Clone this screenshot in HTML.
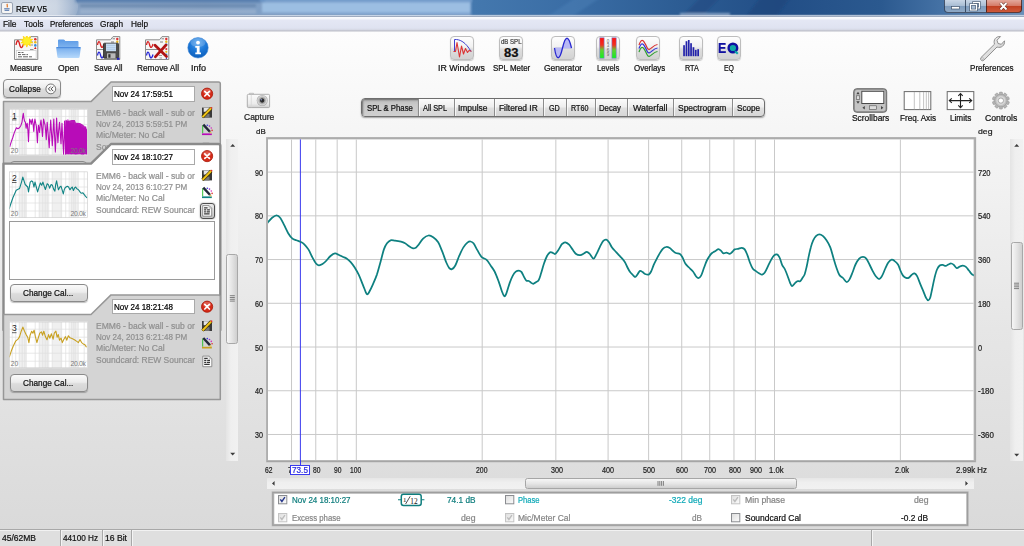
<!DOCTYPE html><html><head><meta charset="utf-8"><title>REW V5</title><style>
html,body{margin:0;padding:0;}
body{width:1024px;height:546px;overflow:hidden;position:relative;font-family:"Liberation Sans",sans-serif;font-size:8.5px;color:#1c1c1c;background:#e6e6e6;}
.t{position:absolute;white-space:nowrap;line-height:14px;transform-origin:0 50%;-webkit-text-stroke:0.22px currentColor;}
.abs{position:absolute;}
#bg{left:0;top:31px;width:1024px;height:498px;background:linear-gradient(#fdfdfd 0%,#f4f4f4 25%,#e6e6e6 60%,#dadada 100%);}
#title{left:0;top:0;width:1024px;height:16px;background:linear-gradient(90deg,#c3d3e6 0px,#b4c8df 150px,#8eaed2 330px,#6e97c4 460px,#3f72a8 560px,#2f6299 700px,#275689 860px,#3a6a9e 930px,#5c86b4 1024px);}
#menubar{left:0;top:16px;width:1024px;height:15.500px;background:linear-gradient(#8d9bb2 0,#a9b4c6 .8px,#fafbfe 1.200px,#f6f7fc 2.500px,#e4e7f4 4.500px,#dfe3f1 12px,#d6d9e5 13.600px,#c3c5cf 14.600px,#dcdde2 15.500px);}
.btn{position:absolute;border:1px solid #8a8a8a;border-radius:4px;background:linear-gradient(#fafafa,#ececec 45%,#dcdcdc 55%,#d4d4d4);box-sizing:border-box;box-shadow:0 1px 1px rgba(0,0,0,.25);}
.ibtn{position:absolute;width:24px;height:24px;border-radius:4px;box-sizing:border-box;border:1px solid #bdbdbd;background:linear-gradient(#fefefe,#f1f1f1 45%,#dedede 55%,#d2d2d2);box-shadow:0 1px 1px rgba(0,0,0,.2);}
.field{position:absolute;box-sizing:border-box;background:#fff;border:1px solid #a9a9a9;}
</style></head><body>
<div id="bg" class="abs"></div>
<svg class="abs" style="left:0;top:0" width="1024" height="16" viewBox="0 0 1024 16"><defs><linearGradient id="tb" x1="0" y1="0" x2="1024" y2="0" gradientUnits="userSpaceOnUse"><stop offset="0" stop-color="#c2cddc"/><stop offset=".055" stop-color="#bac7d9"/><stop offset=".075" stop-color="#8ba4c4"/><stop offset=".2" stop-color="#819dc0"/><stop offset=".33" stop-color="#7fa3cd"/><stop offset=".458" stop-color="#7ea4d0"/><stop offset=".462" stop-color="#4478ae"/><stop offset=".56" stop-color="#3a6da5"/><stop offset=".66" stop-color="#2d5d94"/><stop offset=".76" stop-color="#224e86"/><stop offset=".86" stop-color="#2b598f"/><stop offset=".92" stop-color="#4572a5"/><stop offset="1" stop-color="#6a90ba"/></linearGradient><filter id="bl" x="-5%" y="-50%" width="110%" height="200%"><feGaussianBlur stdDeviation="1.2"/></filter></defs><rect width="1024" height="16" fill="url(#tb)"/><g filter="url(#bl)"><rect x="75" y="-2" width="190" height="4.500" fill="#4f78a9" opacity=".8"/><rect x="80" y="4.500" width="176" height="2.500" fill="#56779f" opacity=".55"/><rect x="80" y="9.500" width="176" height="4" fill="#a9bdd6" opacity=".5"/><rect x="262" y="2.500" width="208" height="10" fill="#a0c1e4" opacity=".9"/><rect x="260" y="-2" width="212" height="4" fill="#6f9acb" opacity=".8"/><path d="M575 -2L600 -2L570 18L545 18Z" fill="#4a7fb5" opacity=".5"/><path d="M700 -2L720 -2L700 18L680 18Z" fill="#1d4880" opacity=".5"/><path d="M760 -2L790 -2L775 18L745 18Z" fill="#1c467c" opacity=".6"/><rect x="680" y="13" width="50" height="3" fill="#a8bed8" opacity=".7"/></g><rect x="70" y="14.500" width="954" height="1" fill="#8ea0bb" opacity=".55"/><rect x="0" y="15.300" width="1024" height=".7" fill="#eef2f8" opacity=".9"/></svg>
<div class="abs" style="left:-14px;top:-8px;width:92px;height:30px;border-radius:15px;background:radial-gradient(ellipse at center,rgba(255,255,255,.4) 0%,rgba(255,255,255,.22) 55%,rgba(255,255,255,0) 100%);"></div>
<svg class="abs" style="left:1px;top:2px" width="12" height="12" viewBox="0 0 12 12"><rect x="0.5" y="0.5" width="11" height="11" rx="1.5" fill="#f4f4f4" stroke="#9aa4b4"/><path d="M6.5 2c-1.5 1.3 1 1.8-.6 3.4" stroke="#e0701c" stroke-width="1.2" fill="none"/><path d="M3.2 6.8h5.4M3.6 8.3h4.6" stroke="#4a6fa8" stroke-width="1"/></svg>
<div class="t" style="left:16.0px;top:2px;font-size:8.69px;color:#000;transform:scaleX(0.930);">REW V5</div>
<div class="abs" style="left:944px;top:0;width:22px;height:13px;border:1px solid rgba(30,45,70,.75);border-top:none;border-radius:0 0 0 4px;box-sizing:border-box;background:linear-gradient(#c9d6e6 0,#a9bdd4 48%,#7f9cbd 52%,#8fa9c6 100%);"></div>
<div class="abs" style="left:965px;top:0;width:22px;height:13px;border:1px solid rgba(30,45,70,.75);border-top:none;box-sizing:border-box;background:linear-gradient(#c9d6e6 0,#a9bdd4 48%,#7f9cbd 52%,#8fa9c6 100%);"></div>
<div class="abs" style="left:986px;top:0;width:36px;height:13px;border:1px solid rgba(50,25,25,.75);border-top:none;border-radius:0 0 4px 0;box-sizing:border-box;background:linear-gradient(#e3a89c 0,#d57b68 48%,#c03f22 52%,#cf5a3a 100%);"></div>
<svg class="abs" style="left:944px;top:0" width="80" height="14" viewBox="0 0 80 14"><rect x="7.5" y="6.5" width="8" height="2.5" fill="#fff" stroke="#44566e" stroke-width=".7"/><rect x="29.5" y="2.5" width="6" height="5.5" fill="none" stroke="#44566e" stroke-width="2.4"/><rect x="29.5" y="2.5" width="6" height="5.5" fill="none" stroke="#fff" stroke-width="1.2"/><rect x="26.500" y="4.5" width="6" height="5.5" fill="#a9bdd4" stroke="#44566e" stroke-width="2.4"/><rect x="26.5" y="4.5" width="6" height="5.5" fill="none" stroke="#fff" stroke-width="1.2"/><path d="M56.500 3l6 6.500M62.500 3l-6 6.500" stroke="#5a2a22" stroke-width="3.2"/><path d="M56.500 3l6 6.500M62.500 3l-6 6.500" stroke="#fff" stroke-width="1.9"/></svg>
<div id="menubar" class="abs"></div>
<div class="t" style="left:3.0px;top:17px;color:#111;transform:scaleX(0.986);">File</div>
<div class="t" style="left:23.5px;top:17px;color:#111;transform:scaleX(0.983);">Tools</div>
<div class="t" style="left:50.0px;top:17px;color:#111;transform:scaleX(0.938);">Preferences</div>
<div class="t" style="left:100.0px;top:17px;color:#111;transform:scaleX(0.973);">Graph</div>
<div class="t" style="left:131.0px;top:17px;color:#111;transform:scaleX(0.972);">Help</div>
<svg class="abs" style="left:14px;top:36px" width="25" height="25" viewBox="0 0 25 25"><path d="M0.500 3.800H14.500L17 0.600H23.800V23.500H0.500Z" fill="#f6f6f6" stroke="#8c8c8c" stroke-width="1"/><circle cx="21.300" cy="3.200" r="1.300" fill="#e03030"/><circle cx="21.300" cy="6.300" r="1.300" fill="#e8b820"/><circle cx="21.300" cy="9.400" r="1.300" fill="#3090e0"/><path d="M20 13l1.300-2.200L22.600 13z" fill="#d02020"/><path d="M2 9C3 3.500 4.500 3.500 5.500 8S8 13 9.500 8" fill="none" stroke="#d82020" stroke-width="1.300"/><path d="M16.500 6h2.500M16.500 9h2.500M16 13.500h3.500" stroke="#777" stroke-width=".8"/><rect x="2.300" y="14.500" width="19.800" height="8" fill="#fff" stroke="#c4c4c4" stroke-width=".6"/><path d="M4 16.500h2.500M7.500 16.500h2M4 18.600h3M8 18.600h3.500M12.500 18.600h1.500M4 20.800h4M9 20.800h5M15 20.800h3" stroke="#555" stroke-width=".9"/><g transform="translate(12.800 5.100) scale(1.08)"><path d="M0-5.600L1.100-2.700L3.300-4.600L2.900-1.600L5.600-1.700L3.500 0.200L5.600 1.700L2.900 1.800L3.300 4.600L1.100 2.800L0 5.600L-1.100 2.800L-3.300 4.600L-2.900 1.800L-5.600 1.700L-3.500 0.200L-5.600-1.700L-2.900-1.600L-3.300-4.600L-1.100-2.700Z" fill="#ffe610" stroke="#ffd000" stroke-width=".6"/><circle r="3.300" fill="#fff028"/></g></svg>
<svg class="abs" style="left:55px;top:38px" width="27" height="22" viewBox="0 0 27 22"><defs><linearGradient id="fo1" x1="0" y1="0" x2="0" y2="1"><stop offset="0" stop-color="#5b9ae6"/><stop offset="1" stop-color="#86b8f0"/></linearGradient><linearGradient id="fo2" x1="0" y1="0" x2="0" y2="1"><stop offset="0" stop-color="#62a0ea"/><stop offset=".25" stop-color="#85b7f0"/><stop offset="1" stop-color="#b7d9fb"/></linearGradient></defs><path d="M3 2.500Q3 1.500 4 1.500H8.500Q9.300 1.500 9.800 2.300L10.300 3H22.500Q23.500 3 23.500 4V11H3Z" fill="url(#fo1)"/><path d="M1.200 10Q1 9 2.200 9H24.800Q26 9 25.800 10L24.600 19Q24.400 20 23.400 20H3.600Q2.600 20 2.400 19Z" fill="url(#fo2)"/><path d="M1.500 9.600H25.500" stroke="#3f80d8" stroke-width=".9" opacity=".8"/></svg>
<svg class="abs" style="left:96px;top:36px" width="25" height="25" viewBox="0 0 25 25"><path d="M0.500 3.800H14.500L17 0.600H23.800V23.500H0.500Z" fill="#f6f6f6" stroke="#8c8c8c" stroke-width="1"/><path d="M0.500 13.500H17" stroke="#8c8c8c" stroke-width="1"/><path d="M1.500 9C2.300 4.500 3.600 4.500 4.500 8.500S6.800 12.500 8 8" fill="none" stroke="#d82020" stroke-width="1.300"/><path d="M1.500 19.500C2.300 15 3.600 15 4.500 19S6.800 23 8 18.500" fill="none" stroke="#2828d8" stroke-width="1.300"/><circle cx="21.300" cy="3" r="1.200" fill="#e03030"/><circle cx="21.300" cy="5.800" r="1.200" fill="#e8b820"/><path d="M16.500 2.800h2.500M15 6h3" stroke="#666" stroke-width=".8"/><rect x="7.500" y="7.200" width="15" height="15" rx="1" fill="#4a4a4a" stroke="#2c2c2c" stroke-width=".8"/><rect x="10" y="7.600" width="10" height="7.600" fill="#c6dcf2"/><path d="M10.500 9.500h9M10.500 11.500h9M10.500 13.400h9" stroke="#a8c4e2" stroke-width=".7"/><rect x="11" y="17.300" width="8.500" height="5" fill="#b9b9b9"/><rect x="12.300" y="18.200" width="2.200" height="3.500" fill="#333"/><rect x="21" y="21.800" width="2.500" height="2" fill="#2020c0"/></svg>
<svg class="abs" style="left:145px;top:36px" width="25" height="25" viewBox="0 0 25 25"><path d="M0.500 3.800H14.500L17 0.600H23.800V23.500H0.500Z" fill="#f6f6f6" stroke="#8c8c8c" stroke-width="1"/><path d="M0.500 13.500H17" stroke="#8c8c8c" stroke-width="1"/><path d="M1.500 9C2.300 4.500 3.600 4.500 4.500 8.500S6.800 12.500 8 8" fill="none" stroke="#d82020" stroke-width="1.300"/><path d="M1.500 19.500C2.300 15 3.600 15 4.500 19S6.800 23 8 18.500" fill="none" stroke="#2828d8" stroke-width="1.300"/><circle cx="21.300" cy="3" r="1.200" fill="#e03030"/><circle cx="21.300" cy="5.800" r="1.200" fill="#e8b820"/><path d="M16.500 2.800h2.500M15 6h3" stroke="#666" stroke-width=".8"/><circle cx="21.300" cy="8.600" r="1.200" fill="#3090e0"/><circle cx="21.300" cy="13" r="1.100" fill="#e03030"/><circle cx="21.300" cy="15.800" r="1.100" fill="#e8b820"/><circle cx="21.300" cy="18.600" r="1.100" fill="#3090e0"/><path d="M14 19.500h3M14.500 22h2.500" stroke="#777" stroke-width=".7"/><path d="M20.500 22.500l1.500-1.500v2z" fill="#2020c0"/><path d="M10 9.200L21.500 20.500M21 9L10.300 20.800" stroke="#b01414" stroke-width="2.700" stroke-linecap="round"/></svg>
<svg class="abs" style="left:187px;top:37px" width="22" height="22" viewBox="0 0 22 22"><defs><radialGradient id="inf" cx=".5" cy=".25" r=".8"><stop offset="0" stop-color="#5aa6ee"/><stop offset=".5" stop-color="#1c78d8"/><stop offset="1" stop-color="#0c5cb8"/></radialGradient></defs><circle cx="11" cy="10.800" r="10.200" fill="url(#inf)" stroke="#3d86d6" stroke-width=".6"/><ellipse cx="11" cy="5.500" rx="7.500" ry="4.500" fill="#fff" opacity=".18"/><circle cx="11" cy="5.600" r="1.900" fill="#fff"/><path d="M8.300 9H12.600V15.600H14V17.300H8.300V15.600H9.800V10.700H8.300Z" fill="#fff"/></svg>
<div class="t" style="left:10.0px;top:61px;color:#111;transform:scaleX(0.974);">Measure</div>
<div class="t" style="left:58.0px;top:61px;color:#111;transform:scaleX(1.010);">Open</div>
<div class="t" style="left:94.0px;top:61px;color:#111;transform:scaleX(0.928);">Save All</div>
<div class="t" style="left:136.6px;top:61px;color:#111;transform:scaleX(0.977);">Remove All</div>
<div class="t" style="left:190.5px;top:61px;color:#111;transform:scaleX(1.065);">Info</div>
<div class="ibtn" style="left:450px;top:36px;width:24px;height:24px"></div><svg class="abs" style="left:450px;top:36px" width="24" height="24" viewBox="0 0 24 24"><path d="M4.500 15.500V3.500C10 3 16 6.500 21 15.500" fill="none" stroke="#4040d0" stroke-width="1"/><path d="M3.500 15.500H5.500L7 6.500L9.500 21L11.500 10L13.500 18L15.500 12.500L17.500 16.500L19 14.500L21.500 15.300" fill="none" stroke="#dc3434" stroke-width="1.100" stroke-linejoin="round"/></svg>
<div class="ibtn" style="left:499px;top:36px;width:24px;height:24px"></div><svg class="abs" style="left:499px;top:36px" width="24" height="24" viewBox="0 0 24 24"></svg>
<div class="t" style="left:501.1px;top:36px;line-height:11px;font-size:6.38px;color:#444;transform:scaleX(0.948);">dB SPL</div>
<div class="t" style="left:504.1px;top:43px;line-height:19px;font-size:13.04px;color:#111;transform:scaleX(1.000);font-weight:bold;">83</div>
<div class="ibtn" style="left:551px;top:36px;width:24px;height:24px"></div><svg class="abs" style="left:551px;top:36px" width="24" height="24" viewBox="0 0 24 24"><path d="M3.500 12H21" stroke="#8888e8" stroke-width=".6"/><path d="M3.500 12C5.500 25 8.500 25 11.500 12S17.500 -1 20.500 12Z" fill="#b8b8f4" /><path d="M3.500 12C5.500 25 8.500 25 11.500 12S17.500 -1 20.500 12" fill="none" stroke="#2828d0" stroke-width="1.300"/></svg>
<div class="ibtn" style="left:596px;top:36px;width:24px;height:24px"></div><svg class="abs" style="left:596px;top:36px" width="24" height="24" viewBox="0 0 24 24"><defs><linearGradient id="lv" x1="0" y1="0" x2="0" y2="1"><stop offset="0" stop-color="#ff1010"/><stop offset=".35" stop-color="#f03020"/><stop offset=".6" stop-color="#60d030"/><stop offset="1" stop-color="#10f020"/></linearGradient></defs><rect x="3.800" y="1.800" width="4.300" height="20.400" fill="url(#lv)" stroke="#8080d0" stroke-width=".6"/><rect x="15.900" y="1.800" width="4.300" height="20.400" fill="url(#lv)" stroke="#8080d0" stroke-width=".6"/><g fill="#666" font-size="4.500" font-family="Liberation Sans, sans-serif" text-anchor="middle"><text x="12" y="6.500">0</text><text x="12" y="11">3</text><text x="12" y="15.500">6</text><text x="12" y="20">9</text></g></svg>
<div class="ibtn" style="left:636px;top:36px;width:24px;height:24px"></div><svg class="abs" style="left:636px;top:36px" width="24" height="24" viewBox="0 0 24 24"><path d="M3 9C6 0 8.500 6 11 11.500S16 9 21.500 8.500" fill="none" stroke="#d83030" stroke-width="1.200"/><path d="M3 12.500C6 3.500 8.500 9.500 11 15S16 12.500 21.500 12" fill="none" stroke="#3030d8" stroke-width="1.200"/><path d="M3 16C6 7 8.500 13 11 18.500S16 16 21.500 15.500" fill="none" stroke="#30a030" stroke-width="1.200"/></svg>
<div class="ibtn" style="left:679px;top:36px;width:24px;height:24px"></div><svg class="abs" style="left:679px;top:36px" width="24" height="24" viewBox="0 0 24 24"><rect x="4.2" y="9.2" width="1.700" height="11" fill="#2222aa"/><rect x="6.6" y="5.199999999999999" width="1.700" height="15" fill="#2222aa"/><rect x="8.9" y="4.0" width="1.700" height="16.2" fill="#2222aa"/><rect x="11.2" y="7.199999999999999" width="1.700" height="13" fill="#2222aa"/><rect x="13.6" y="11.2" width="1.700" height="9" fill="#2222aa"/><rect x="15.9" y="13.899999999999999" width="1.700" height="6.3" fill="#2222aa"/><rect x="18.3" y="13.2" width="1.700" height="7" fill="#2222aa"/></svg>
<div class="ibtn" style="left:717px;top:36px;width:24px;height:24px"></div><svg class="abs" style="left:717px;top:36px" width="24" height="24" viewBox="0 0 24 24"></svg>
<div class="t" style="left:718.4px;top:37px;line-height:21px;font-size:15.50px;color:#1010a0;transform:scaleX(0.800);font-weight:bold;">E</div>
<svg class="abs" style="left:717px;top:36px" width="24" height="24" viewBox="0 0 24 24"><circle cx="15.900" cy="12" r="4.300" fill="#10a8a8" stroke="#1010a0" stroke-width="2.400"/><path d="M18 15.300L20.800 17.800" stroke="#10a8a8" stroke-width="2.200"/></svg>
<div class="t" style="left:438.0px;top:61px;color:#111;transform:scaleX(1.032);">IR Windows</div>
<div class="t" style="left:492.8px;top:61px;color:#111;transform:scaleX(0.934);">SPL Meter</div>
<div class="t" style="left:543.8px;top:61px;color:#111;transform:scaleX(0.998);">Generator</div>
<div class="t" style="left:596.6px;top:61px;color:#111;transform:scaleX(0.912);">Levels</div>
<div class="t" style="left:633.7px;top:61px;color:#111;transform:scaleX(0.933);">Overlays</div>
<div class="t" style="left:684.6px;top:61px;color:#111;transform:scaleX(0.851);">RTA</div>
<div class="t" style="left:724.0px;top:61px;color:#111;transform:scaleX(0.814);">EQ</div>
<svg class="abs" style="left:978px;top:34px" width="28" height="28" viewBox="0 0 28 28"><defs><linearGradient id="wr" x1="0" y1="0" x2="1" y2="1"><stop offset="0" stop-color="#fbfbfb"/><stop offset="1" stop-color="#c4c4c4"/></linearGradient></defs><path d="M3 23.500L16.500 10.200C15 6 18 2 22.500 2.600L19 6.200L20 9.500L23.300 10.300L26.500 6.800C27.200 11.500 23 14.500 19 13L5.800 26.300C4 27.800 1.500 25.500 3 23.500Z" fill="url(#wr)" stroke="#858585" stroke-width=".9" stroke-linejoin="round"/><circle cx="4.800" cy="24.600" r=".9" fill="#fff" stroke="#888" stroke-width=".5"/></svg>
<div class="t" style="left:970.4px;top:61px;color:#111;transform:scaleX(0.951);">Preferences</div>
<div class="btn" style="left:3.300px;top:79.300px;width:58px;height:18.400px"></div>
<div class="t" style="left:8.6px;top:82px;color:#111;transform:scaleX(0.961);">Collapse</div>
<svg class="abs" style="left:44px;top:82px" width="14" height="14" viewBox="0 0 14 14"><circle cx="6.800" cy="6.900" r="4.900" fill="#fafafa" stroke="#555" stroke-width=".8"/><path d="M6.600 4.600L4.400 6.900L6.600 9.200M9.300 4.600L7.100 6.900L9.300 9.200" fill="none" stroke="#333" stroke-width=".9"/></svg>
<svg class="abs" style="left:0;top:0" width="240" height="420" viewBox="0 0 240 420"><path d="M3.500 101.6H91L111 82.0H218.500Q220.300 82.0 220.300 83.8V200H3.500Z" fill="#d2d2d2" stroke="#979797" stroke-width="1.5" stroke-linejoin="round"/><g transform="translate(207.1 93.7)"><circle r="5.600" fill="#d42a18" stroke="#a81808" stroke-width=".8"/><ellipse cx="0" cy="-2.300" rx="4" ry="2.600" fill="#fff" opacity=".22"/><path d="M-2.300-2.300L2.300 2.300M2.300-2.300L-2.300 2.300" stroke="#fff" stroke-width="1.700" stroke-linecap="round"/></g><g transform="translate(201.5 106.8)"><rect x="0.500" y="0.800" width="10" height="10" fill="#3a3a3a"/><rect x="2.200" y="1" width="6" height="4" fill="#e4e4e4"/><rect x="3" y="7" width="5" height="3.800" fill="#777"/><path d="M1 10.300L9.800 1.200" stroke="#3c3000" stroke-width="3.200"/><path d="M1 10.300L9.800 1.200" stroke="#f0c418" stroke-width="2"/><circle cx="10" cy="1" r=".9" fill="#e03030"/></g><g transform="translate(201.5 123.8)"><path d="M1.200 1.500V9.500" stroke="#30c030" stroke-width="1"/><rect x="0.500" y="9.600" width="9.800" height="1.700" fill="#b80cb8"/><circle cx="5.800" cy="1.400" r=".8" fill="#3838e0"/><circle cx="8" cy="2.300" r=".8" fill="#9030d0"/><circle cx="9.800" cy="4.200" r=".8" fill="#d030c0"/><circle cx="10.600" cy="6.600" r=".8" fill="#e03030"/><path d="M1.800 .8L8.600 8.200" stroke="#23283a" stroke-width="2.400"/><path d="M8.300 7.800L9.800 9.600" stroke="#e0c060" stroke-width="1.400"/></g><g transform="translate(202.4 142.8)"><path d="M.4 .4H6.800L9.400 3V11H.4Z" fill="#fcfcfc" stroke="#7a7a7a" stroke-width=".8"/><path d="M6.800 .4V3H9.400" fill="none" stroke="#9a9a9a" stroke-width=".6"/><path d="M1.800 2.600h3.500M1.800 4.600h2.200M4.800 4.600h2.800M1.800 6.600h1.800M4.300 6.600h3.300M1.800 8.700h5.500" stroke="#333" stroke-width="1.150"/></g></svg>
<svg class="abs" style="left:9px;top:108px" width="80" height="48" viewBox="-0.20 -0.90 80 48"><rect x="0" y="0" width="78.6" height="46.4" fill="#fff"/><rect x="10" y="0" width="7" height="46.4" fill="#f0f0f0"/><rect x="30" y="0" width="9" height="46.4" fill="#f0f0f0"/><rect x="43" y="0" width="10" height="46.4" fill="#f0f0f0"/><rect x="61" y="0" width="8" height="46.4" fill="#f0f0f0"/><path d="M3 0V46.4M6.5 0V46.4M10 0V46.4M13 0V46.4M15.5 0V46.4M17 0V46.4M26 0V46.4M30 0V46.4M33.5 0V46.4M36 0V46.4M38 0V46.4M39.5 0V46.4M43 0V46.4M52 0V46.4M56.5 0V46.4M60 0V46.4M62.5 0V46.4M64.5 0V46.4M66 0V46.4M69 0V46.4M75 0V46.4M0 7.5H78.6M0 15.5H78.6M0 23.5H78.6M0 31.5H78.6M0 39.5H78.6" stroke="#e0e0e0" stroke-width=".7" fill="none"/><polygon points="56.2,45.5 56.4,25.6 57.6,12.7 60.5,11.7 62.6,11.2 65.6,11.0 66.7,13.8 70.8,14.1 73.8,15.8 76.9,18.9 77.9,21.5 77.9,45.7" fill="#b608b6" opacity=".93"/><polyline points="0.5,37.9 2.1,32.7 3.6,28.6 5.2,23.5 7.2,18.9 8.7,19.9 10.3,18.9 11.8,16.3 12.8,13.3 13.6,7.1 14.1,4.5 14.7,9.2 15.4,12.2 16.2,13.3 16.9,19.4 17.5,15.3 18.0,14.3 18.7,21.5 19.3,32.7 19.9,19.4 20.5,10.2 21.3,12.2 22.1,15.3 22.6,11.7 23.1,10.2 23.9,15.3 24.6,22.5 25.1,15.3 25.7,10.2 26.5,14.3 27.2,17.4 27.7,25.6 28.2,33.8 28.7,23.5 29.2,16.3 29.8,19.4 30.3,23.5 31.0,16.3 31.8,11.2 32.6,19.4 33.3,27.6 33.9,17.4 34.4,10.2 35.1,13.3 35.9,16.3 36.5,23.5 37.1,30.7 37.5,20.4 38.0,13.3 39.0,25.6 40.0,38.9 40.8,23.5 41.5,11.2 42.3,24.5 43.1,36.8 43.9,22.5 44.6,10.2 45.3,25.6 46.2,43.0 46.8,25.6 47.4,9.2 48.0,21.5 48.7,33.8 49.4,22.5 50.3,13.3 51.1,24.5 51.8,34.8 52.3,23.5 52.8,14.3 53.5,29.7 54.4,45.5 54.9,28.6 55.4,12.2 56.0,28.6 56.4,45.5 56.8,11.4 57.1,43.1 57.4,12.1 57.7,43.4 58.0,13.4 58.3,40.3 58.7,11.0 59.0,44.8 59.3,12.3 59.6,41.3 59.9,15.5 60.2,42.6 60.5,15.0 60.8,42.7 61.1,14.4 61.4,40.8 61.7,14.6 62.0,45.0 62.3,14.4 62.7,44.2 63.0,15.2 63.3,40.3 63.6,15.7 63.9,43.4 64.2,14.1 64.5,40.1 64.8,16.6 65.1,42.7 65.4,16.2 65.7,45.0 66.0,16.4 66.3,45.3 66.7,15.2 67.0,44.6 67.3,15.7 67.6,45.4 67.9,17.6 68.2,40.5 68.5,14.8 68.8,41.2 69.1,18.4 69.4,42.4 69.7,17.2 70.0,41.7 70.3,16.9 70.6,42.2 71.0,16.5 71.3,43.3 71.6,17.6 71.9,45.2 72.2,18.3 72.5,45.3 72.8,19.2 73.1,45.7 73.4,18.6 73.7,40.9 74.0,19.6 74.3,45.5 74.6,20.0 75.0,43.2 75.3,19.4 75.6,41.1 75.9,20.1 76.2,43.3 76.5,18.0 76.8,40.3 77.1,20.6 77.4,45.7" fill="none" stroke="#b80cb8" stroke-width="1.100" stroke-linejoin="round"/><rect x=".35" y=".35" width="77.89999999999999" height="45.699999999999996" fill="none" stroke="#d0d0d0" stroke-width=".7"/><text x="2.800" y="9.800" font-size="8.500" fill="#222" font-family="Liberation Sans, sans-serif">1</text><path d="M2.800 11h4.500" stroke="#222" stroke-width=".7"/><text x="1.500" y="44.300" font-size="6.800" fill="#7a7a7a" font-family="Liberation Sans, sans-serif">20</text><text x="76.500" y="44.300" font-size="6.800" fill="#7a7a7a" text-anchor="end" font-family="Liberation Sans, sans-serif" letter-spacing="-.3">20.0k</text></svg>
<div class="field" style="left:111.600px;top:86.3px;width:83.300px;height:15.300px"></div>
<div class="t" style="left:114.3px;top:87px;color:#000;transform:scaleX(0.944);">Nov 24 17:59:51</div>
<div class="abs" style="left:95px;top:105.3px;width:99.800px;height:50px;overflow:hidden">
<div class="t" style="left:0.7px;top:1px;color:#909090;transform:scaleX(1.006);">EMM6 - back wall - sub or</div>
<div class="t" style="left:0.7px;top:12px;color:#909090;transform:scaleX(0.946);">Nov 24, 2013 5:59:51 PM</div>
<div class="t" style="left:0.7px;top:23px;color:#909090;transform:scaleX(1.009);">Mic/Meter: No Cal</div>
<div class="t" style="left:0.7px;top:35px;color:#909090;transform:scaleX(0.994);">Soundcard: REW Souncard</div>
</div>
<div class="btn" style="left:9.700px;top:161.3px;width:77.800px;height:17.200px"></div>
<svg class="abs" style="left:0;top:0" width="240" height="420" viewBox="0 0 240 420"><path d="M3.500 163.6H91L111 144.0H218.500Q220.300 144.0 220.300 145.8V330H3.500Z" fill="#ffffff" stroke="#8a8a8a" stroke-width="2.4" stroke-linejoin="round"/><g transform="translate(207.1 156.10000000000002)"><circle r="5.600" fill="#d42a18" stroke="#a81808" stroke-width=".8"/><ellipse cx="0" cy="-2.300" rx="4" ry="2.600" fill="#fff" opacity=".22"/><path d="M-2.300-2.300L2.300 2.300M2.300-2.300L-2.300 2.300" stroke="#fff" stroke-width="1.700" stroke-linecap="round"/></g><g transform="translate(201.5 169.60000000000002)"><rect x="0.500" y="0.800" width="10" height="10" fill="#3a3a3a"/><rect x="2.200" y="1" width="6" height="4" fill="#e4e4e4"/><rect x="3" y="7" width="5" height="3.800" fill="#777"/><path d="M1 10.300L9.800 1.200" stroke="#3c3000" stroke-width="3.200"/><path d="M1 10.300L9.800 1.200" stroke="#f0c418" stroke-width="2"/><circle cx="10" cy="1" r=".9" fill="#e03030"/></g><g transform="translate(201.5 186.8)"><path d="M1.200 1.500V9.500" stroke="#30c030" stroke-width="1"/><rect x="0.500" y="9.600" width="9.800" height="1.700" fill="#108484"/><circle cx="5.800" cy="1.400" r=".8" fill="#3838e0"/><circle cx="8" cy="2.300" r=".8" fill="#9030d0"/><circle cx="9.800" cy="4.200" r=".8" fill="#d030c0"/><circle cx="10.600" cy="6.600" r=".8" fill="#e03030"/><path d="M1.800 .8L8.600 8.200" stroke="#23283a" stroke-width="2.400"/><path d="M8.300 7.800L9.800 9.600" stroke="#e0c060" stroke-width="1.400"/></g></svg>
<svg class="abs" style="left:9px;top:171px" width="80" height="48" viewBox="-0.20 -0.50 80 48"><rect x="0" y="0" width="78.6" height="46.4" fill="#fff"/><rect x="10" y="0" width="7" height="46.4" fill="#f0f0f0"/><rect x="30" y="0" width="9" height="46.4" fill="#f0f0f0"/><rect x="43" y="0" width="10" height="46.4" fill="#f0f0f0"/><rect x="61" y="0" width="8" height="46.4" fill="#f0f0f0"/><path d="M3 0V46.4M6.5 0V46.4M10 0V46.4M13 0V46.4M15.5 0V46.4M17 0V46.4M26 0V46.4M30 0V46.4M33.5 0V46.4M36 0V46.4M38 0V46.4M39.5 0V46.4M43 0V46.4M52 0V46.4M56.5 0V46.4M60 0V46.4M62.5 0V46.4M64.5 0V46.4M66 0V46.4M69 0V46.4M75 0V46.4M0 7.5H78.6M0 15.5H78.6M0 23.5H78.6M0 31.5H78.6M0 39.5H78.6" stroke="#e0e0e0" stroke-width=".7" fill="none"/><polyline points="-0.1,37.7 1.7,32.0 3.7,26.2 7.0,18.8 10.3,17.1 12.3,10.6 13.6,5.6 14.9,9.7 16.0,13.0 18.5,15.5 19.3,20.4 21.0,10.6 22.3,9.4 23.5,10.1 24.8,15.5 25.8,10.6 27.1,15.5 28.4,20.4 30.1,14.7 31.2,11.4 32.5,13.8 33.7,10.6 35.0,14.7 36.2,18.0 38.0,12.2 39.3,13.4 40.4,16.7 41.9,13.0 43.2,13.8 44.4,17.6 45.7,19.6 46.5,13.0 47.4,9.4 48.4,14.7 49.3,18.3 50.7,15.5 51.8,14.7 53.1,18.8 54.1,22.4 55.1,18.0 56.1,16.0 58.1,14.7 59.4,15.5 60.7,18.3 61.9,16.7 63.0,15.5 64.2,19.0 65.5,16.3 66.5,15.5 67.6,17.3 69.0,18.0 70.3,19.6 71.3,21.3 72.6,21.8 73.7,21.3 75.1,23.2 76.2,24.6 77.9,26.5" fill="none" stroke="#108484" stroke-width="1.100" stroke-linejoin="round"/><rect x=".35" y=".35" width="77.89999999999999" height="45.699999999999996" fill="none" stroke="#d0d0d0" stroke-width=".7"/><text x="2.800" y="9.800" font-size="8.500" fill="#222" font-family="Liberation Sans, sans-serif">2</text><path d="M2.800 11h4.500" stroke="#222" stroke-width=".7"/><text x="1.500" y="44.300" font-size="6.800" fill="#7a7a7a" font-family="Liberation Sans, sans-serif">20</text><text x="76.500" y="44.300" font-size="6.800" fill="#7a7a7a" text-anchor="end" font-family="Liberation Sans, sans-serif" letter-spacing="-.3">20.0k</text></svg>
<div class="field" style="left:111.600px;top:149.3px;width:83.300px;height:15.300px"></div>
<div class="t" style="left:114.3px;top:150px;color:#000;transform:scaleX(0.944);">Nov 24 18:10:27</div>
<div class="abs" style="left:95px;top:168.3px;width:99.800px;height:50px;overflow:hidden">
<div class="t" style="left:0.7px;top:1px;color:#909090;transform:scaleX(1.006);">EMM6 - back wall - sub or</div>
<div class="t" style="left:0.7px;top:12px;color:#909090;transform:scaleX(0.946);">Nov 24, 2013 6:10:27 PM</div>
<div class="t" style="left:0.7px;top:23px;color:#909090;transform:scaleX(1.009);">Mic/Meter: No Cal</div>
<div class="t" style="left:0.7px;top:35px;color:#909090;transform:scaleX(0.994);">Soundcard: REW Souncard</div>
</div>
<div class="btn" style="left:199.500px;top:203.300px;width:15.300px;height:15.300px;border-color:#4e4e4e;border-radius:3px;background:linear-gradient(#ececec,#c4c4c4);box-shadow:0 0 1.500px rgba(0,0,0,.5)"></div>
<svg class="abs" style="left:0;top:0" width="240" height="420" viewBox="0 0 240 420"><g transform="translate(202.3 205.2)"><path d="M.4 .4H6.800L9.400 3V11H.4Z" fill="#fcfcfc" stroke="#7a7a7a" stroke-width=".8"/><path d="M6.800 .4V3H9.400" fill="none" stroke="#9a9a9a" stroke-width=".6"/><path d="M1.800 2.600h3.500M1.800 4.600h2.200M4.800 4.600h2.800M1.800 6.600h1.800M4.300 6.600h3.300M1.800 8.700h5.500" stroke="#333" stroke-width="1.150"/></g></svg>
<div class="field" style="left:9px;top:221.300px;width:205.800px;height:58.700px;border-color:#9a9a9a"></div>
<div class="btn" style="left:10px;top:284px;width:78px;height:18px"></div>
<div class="t" style="left:22.7px;top:286px;color:#111;transform:scaleX(0.968);">Change Cal...</div>
<svg class="abs" style="left:0;top:0" width="240" height="420" viewBox="0 0 240 420"><path d="M3.500 314.5H91L111 294.9H218.500Q220.300 294.9 220.300 296.7V399.6H3.500Z" fill="#d4d4d4" stroke="#979797" stroke-width="1.5" stroke-linejoin="round"/><g transform="translate(207.1 306.7)"><circle r="5.600" fill="#d42a18" stroke="#a81808" stroke-width=".8"/><ellipse cx="0" cy="-2.300" rx="4" ry="2.600" fill="#fff" opacity=".22"/><path d="M-2.300-2.300L2.300 2.300M2.300-2.300L-2.300 2.300" stroke="#fff" stroke-width="1.700" stroke-linecap="round"/></g><g transform="translate(201.5 320.2)"><rect x="0.500" y="0.800" width="10" height="10" fill="#3a3a3a"/><rect x="2.200" y="1" width="6" height="4" fill="#e4e4e4"/><rect x="3" y="7" width="5" height="3.800" fill="#777"/><path d="M1 10.300L9.800 1.200" stroke="#3c3000" stroke-width="3.200"/><path d="M1 10.300L9.800 1.200" stroke="#f0c418" stroke-width="2"/><circle cx="10" cy="1" r=".9" fill="#e03030"/></g><g transform="translate(201.5 337.2)"><path d="M1.200 1.500V9.500" stroke="#30c030" stroke-width="1"/><rect x="0.500" y="9.600" width="9.800" height="1.700" fill="#c8a020"/><circle cx="5.800" cy="1.400" r=".8" fill="#3838e0"/><circle cx="8" cy="2.300" r=".8" fill="#9030d0"/><circle cx="9.800" cy="4.200" r=".8" fill="#d030c0"/><circle cx="10.600" cy="6.600" r=".8" fill="#e03030"/><path d="M1.800 .8L8.600 8.200" stroke="#23283a" stroke-width="2.400"/><path d="M8.300 7.800L9.800 9.600" stroke="#e0c060" stroke-width="1.400"/></g><g transform="translate(202.4 355.7)"><path d="M.4 .4H6.800L9.400 3V11H.4Z" fill="#fcfcfc" stroke="#7a7a7a" stroke-width=".8"/><path d="M6.800 .4V3H9.400" fill="none" stroke="#9a9a9a" stroke-width=".6"/><path d="M1.800 2.600h3.500M1.800 4.600h2.200M4.800 4.600h2.800M1.800 6.600h1.800M4.300 6.600h3.300M1.800 8.700h5.500" stroke="#333" stroke-width="1.150"/></g></svg>
<svg class="abs" style="left:9px;top:321px" width="80" height="48" viewBox="-0.20 -0.70 80 48"><rect x="0" y="0" width="78.6" height="46.4" fill="#fff"/><rect x="10" y="0" width="7" height="46.4" fill="#f0f0f0"/><rect x="30" y="0" width="9" height="46.4" fill="#f0f0f0"/><rect x="43" y="0" width="10" height="46.4" fill="#f0f0f0"/><rect x="61" y="0" width="8" height="46.4" fill="#f0f0f0"/><path d="M3 0V46.4M6.5 0V46.4M10 0V46.4M13 0V46.4M15.5 0V46.4M17 0V46.4M26 0V46.4M30 0V46.4M33.5 0V46.4M36 0V46.4M38 0V46.4M39.5 0V46.4M43 0V46.4M52 0V46.4M56.5 0V46.4M60 0V46.4M62.5 0V46.4M64.5 0V46.4M66 0V46.4M69 0V46.4M75 0V46.4M0 7.5H78.6M0 15.5H78.6M0 23.5H78.6M0 31.5H78.6M0 39.5H78.6" stroke="#e0e0e0" stroke-width=".7" fill="none"/><polyline points="-0.0,35.6 2.0,29.6 4.0,24.6 6.4,19.5 8.8,17.5 10.4,14.9 12.0,9.5 13.7,5.4 15.3,9.5 16.9,12.9 18.5,15.5 19.7,20.9 20.9,13.5 22.5,9.5 23.7,11.5 24.9,8.5 26.1,14.5 27.7,20.9 29.0,16.5 30.6,11.5 32.2,10.1 33.4,13.5 34.6,9.5 36.2,14.9 37.8,18.1 39.4,12.9 40.6,16.5 42.2,12.1 43.9,17.5 45.1,11.5 46.7,9.5 47.9,15.5 49.1,12.9 50.3,18.5 51.9,16.5 53.1,20.9 54.7,17.5 56.3,14.9 57.5,18.5 59.2,14.1 60.8,16.1 62.8,16.9 65.2,18.1 67.6,19.7 69.2,20.9 70.8,17.7 72.4,20.9 74.1,22.2 75.7,23.0 77.3,25.6" fill="none" stroke="#c8a020" stroke-width="1.100" stroke-linejoin="round"/><rect x=".35" y=".35" width="77.89999999999999" height="45.699999999999996" fill="none" stroke="#d0d0d0" stroke-width=".7"/><text x="2.800" y="9.800" font-size="8.500" fill="#222" font-family="Liberation Sans, sans-serif">3</text><path d="M2.800 11h4.500" stroke="#222" stroke-width=".7"/><text x="1.500" y="44.300" font-size="6.800" fill="#7a7a7a" font-family="Liberation Sans, sans-serif">20</text><text x="76.500" y="44.300" font-size="6.800" fill="#7a7a7a" text-anchor="end" font-family="Liberation Sans, sans-serif" letter-spacing="-.3">20.0k</text></svg>
<div class="field" style="left:111.600px;top:299.2px;width:83.300px;height:15.300px"></div>
<div class="t" style="left:114.3px;top:300px;color:#000;transform:scaleX(0.944);">Nov 24 18:21:48</div>
<div class="abs" style="left:95px;top:318.2px;width:99.800px;height:50px;overflow:hidden">
<div class="t" style="left:0.7px;top:1px;color:#909090;transform:scaleX(1.006);">EMM6 - back wall - sub or</div>
<div class="t" style="left:0.7px;top:12px;color:#909090;transform:scaleX(0.946);">Nov 24, 2013 6:21:48 PM</div>
<div class="t" style="left:0.7px;top:23px;color:#909090;transform:scaleX(1.009);">Mic/Meter: No Cal</div>
<div class="t" style="left:0.7px;top:35px;color:#909090;transform:scaleX(0.994);">Soundcard: REW Souncard</div>
</div>
<div class="btn" style="left:10px;top:374px;width:78px;height:18px"></div>
<div class="t" style="left:22.7px;top:376px;color:#111;transform:scaleX(0.968);">Change Cal...</div>
<div class="abs" style="left:226px;top:139px;width:12px;height:322px;background:linear-gradient(90deg,#e4e4e4,#efefef 40%,#f1f1f1)"></div>
<div class="abs" style="left:226px;top:254px;width:12px;height:90px;box-sizing:border-box;border:1px solid #a8a8a8;border-radius:2.500px;background:linear-gradient(90deg,#f6f6f6,#e4e4e4 50%,#cfcfcf)"></div>
<svg class="abs" style="left:226px;top:138px" width="14" height="324" viewBox="0 0 14 324"><path d="M4.200 8.800L6.700 6.100L9.200 8.800Z" fill="#3c3c3c"/><path d="M4.200 314.800L6.700 317.500L9.200 314.800Z" fill="#3c3c3c"/><path d="M3.800 157.700h5M3.800 159.500h5M3.800 161.300h5M3.800 163.100h5" stroke="#555" stroke-width=".7"/></svg>
<svg class="abs" style="left:246px;top:92px" width="26" height="18" viewBox="0 0 26 18"><defs><linearGradient id="cam" x1="0" y1="0" x2="0" y2="1"><stop offset="0" stop-color="#fbfbfb"/><stop offset=".7" stop-color="#ececec"/><stop offset="1" stop-color="#cfcfcf"/></linearGradient><radialGradient id="lens" cx=".5" cy=".5" r=".5"><stop offset="0" stop-color="#222"/><stop offset=".32" stop-color="#333"/><stop offset=".45" stop-color="#999"/><stop offset=".8" stop-color="#d8d8d8"/><stop offset="1" stop-color="#a4a4a4"/></radialGradient></defs><path d="M3.500 1.200h4v1.300h-4z" fill="#dcdcdc" stroke="#aaa" stroke-width=".5"/><rect x="1.300" y="2.300" width="22.300" height="13.300" rx="1.200" fill="url(#cam)" stroke="#9c9c9c" stroke-width=".8"/><path d="M5.300 2.800V15.200" stroke="#d8d8d8" stroke-width=".8"/><circle cx="16.200" cy="8.500" r="5.500" fill="url(#lens)"/><circle cx="15.400" cy="7.700" r=".8" fill="#8090c0"/></svg>
<div class="t" style="left:244.0px;top:110px;color:#222;transform:scaleX(0.999);">Capture</div>
<div class="t" style="left:255.5px;top:125px;line-height:13px;font-size:8.02px;color:#222;transform:scaleX(0.989);">dB</div>
<div class="t" style="left:978.0px;top:125px;line-height:13px;font-size:8.02px;color:#222;transform:scaleX(1.084);">deg</div>
<div class="abs" style="left:360.500px;top:98.200px;width:404.500px;height:18.600px;box-sizing:border-box;border:1px solid #6e6e6e;border-radius:4px;background:linear-gradient(#fbfbfb,#efefef 45%,#dfdfdf 55%,#d6d6d6);box-shadow:0 1px 1.500px rgba(0,0,0,.35);overflow:hidden"><div class="abs" style="left:0;top:0;width:56.500px;height:17.400px;background:linear-gradient(#b9b9b9,#c9c9c9 30%,#d0d0d0);box-shadow:inset 1px 1px 2px rgba(0,0,0,.45)"></div><div class="abs" style="left:56.2px;top:0;width:1px;height:17.400px;background:#8c8c8c"></div><div class="abs" style="left:57.2px;top:0;width:1px;height:17.400px;background:rgba(255,255,255,.7)"></div><div class="abs" style="left:92.1px;top:0;width:1px;height:17.400px;background:#8c8c8c"></div><div class="abs" style="left:93.1px;top:0;width:1px;height:17.400px;background:rgba(255,255,255,.7)"></div><div class="abs" style="left:132.0px;top:0;width:1px;height:17.400px;background:#8c8c8c"></div><div class="abs" style="left:133.0px;top:0;width:1px;height:17.400px;background:rgba(255,255,255,.7)"></div><div class="abs" style="left:181.9px;top:0;width:1px;height:17.400px;background:#8c8c8c"></div><div class="abs" style="left:182.9px;top:0;width:1px;height:17.400px;background:rgba(255,255,255,.7)"></div><div class="abs" style="left:204.0px;top:0;width:1px;height:17.400px;background:#8c8c8c"></div><div class="abs" style="left:205.0px;top:0;width:1px;height:17.400px;background:rgba(255,255,255,.7)"></div><div class="abs" style="left:233.0px;top:0;width:1px;height:17.400px;background:#8c8c8c"></div><div class="abs" style="left:234.0px;top:0;width:1px;height:17.400px;background:rgba(255,255,255,.7)"></div><div class="abs" style="left:265.5px;top:0;width:1px;height:17.400px;background:#8c8c8c"></div><div class="abs" style="left:266.5px;top:0;width:1px;height:17.400px;background:rgba(255,255,255,.7)"></div><div class="abs" style="left:311.0px;top:0;width:1px;height:17.400px;background:#8c8c8c"></div><div class="abs" style="left:312.0px;top:0;width:1px;height:17.400px;background:rgba(255,255,255,.7)"></div><div class="abs" style="left:370.8px;top:0;width:1px;height:17.400px;background:#8c8c8c"></div><div class="abs" style="left:371.8px;top:0;width:1px;height:17.400px;background:rgba(255,255,255,.7)"></div></div>
<div class="t" style="left:366.8px;top:101px;color:#111;transform:scaleX(0.913);">SPL &amp; Phase</div>
<div class="t" style="left:423.0px;top:101px;color:#111;transform:scaleX(0.865);">All SPL</div>
<div class="t" style="left:458.0px;top:101px;color:#111;transform:scaleX(0.991);">Impulse</div>
<div class="t" style="left:498.7px;top:101px;color:#111;transform:scaleX(0.987);">Filtered IR</div>
<div class="t" style="left:548.7px;top:101px;color:#111;transform:scaleX(0.847);">GD</div>
<div class="t" style="left:570.8px;top:101px;color:#111;transform:scaleX(0.843);">RT60</div>
<div class="t" style="left:599.4px;top:101px;color:#111;transform:scaleX(0.909);">Decay</div>
<div class="t" style="left:632.5px;top:101px;color:#111;transform:scaleX(1.038);">Waterfall</div>
<div class="t" style="left:677.8px;top:101px;color:#111;transform:scaleX(0.995);">Spectrogram</div>
<div class="t" style="left:736.9px;top:101px;color:#111;transform:scaleX(0.954);">Scope</div>
<svg class="abs" style="left:850px;top:86px" width="174" height="30" viewBox="0 0 174 30"><rect x="3.700" y="2.700" width="33" height="23.600" rx="3" fill="#9a9a9a" stroke="#6a6a6a" stroke-width="1"/><rect x="5" y="4" width="30.400" height="21" rx="2" fill="#c4c4c4"/><rect x="11.800" y="5.300" width="22" height="12.200" fill="#fff" stroke="#4a4a4a" stroke-width="1"/><path d="M6.300 8.200L8 5.800L9.700 8.200ZM6.300 15.300L8 17.700L9.700 15.300Z" fill="#444"/><rect x="6.300" y="9.800" width="3.400" height="3.600" fill="#ddd" stroke="#555" stroke-width=".6"/><path d="M14.800 20L12.400 21.700L14.800 23.400ZM31 20L33.400 21.700L31 23.400Z" fill="#444"/><rect x="19.500" y="19.800" width="6.800" height="3.600" fill="#ddd" stroke="#555" stroke-width=".6"/><rect x="54.200" y="5.600" width="26.600" height="18" fill="#fff" stroke="#6a6a6a" stroke-width="1"/><path d="M64.300 6V23.300M69.800 6V23.300M73.600 6V23.300M76.300 6V23.300M78.600 6V23.300" stroke="#b4b4b4" stroke-width=".8"/><rect x="97.200" y="5.600" width="26.600" height="18" fill="#fff" stroke="#6a6a6a" stroke-width="1"/><path d="M99.500 14.600H121.500M110.500 8V21.200" stroke="#222" stroke-width="1.100"/><path d="M101.800 12.400L99.300 14.600L101.800 16.800M119.200 12.400L121.700 14.600L119.200 16.800M108.300 9.900L110.500 7.600L112.700 9.900M108.300 19.300L110.500 21.600L112.700 19.300" fill="none" stroke="#222" stroke-width="1.100"/><g transform="translate(150.900 14.600)"><g fill="#b4b4b4" stroke="#8e8e8e" stroke-width=".5"><rect x="-1.600" y="-8.500" width="3.200" height="5" rx=".8" transform="rotate(0)"/><rect x="-1.600" y="-8.500" width="3.200" height="5" rx=".8" transform="rotate(36)"/><rect x="-1.600" y="-8.500" width="3.200" height="5" rx=".8" transform="rotate(72)"/><rect x="-1.600" y="-8.500" width="3.200" height="5" rx=".8" transform="rotate(108)"/><rect x="-1.600" y="-8.500" width="3.200" height="5" rx=".8" transform="rotate(144)"/><rect x="-1.600" y="-8.500" width="3.200" height="5" rx=".8" transform="rotate(180)"/><rect x="-1.600" y="-8.500" width="3.200" height="5" rx=".8" transform="rotate(216)"/><rect x="-1.600" y="-8.500" width="3.200" height="5" rx=".8" transform="rotate(252)"/><rect x="-1.600" y="-8.500" width="3.200" height="5" rx=".8" transform="rotate(288)"/><rect x="-1.600" y="-8.500" width="3.200" height="5" rx=".8" transform="rotate(324)"/></g><circle r="6.200" fill="#bdbdbd" stroke="#9a9a9a" stroke-width=".6"/><circle r="4.600" fill="#d6d6d6"/><circle r="2.600" fill="#fff" stroke="#9a9a9a" stroke-width=".8"/></g></svg>
<div class="t" style="left:851.7px;top:111px;color:#111;transform:scaleX(0.987);">Scrollbars</div>
<div class="t" style="left:900.0px;top:111px;color:#111;transform:scaleX(0.953);">Freq. Axis</div>
<div class="t" style="left:950.0px;top:111px;color:#111;transform:scaleX(0.960);">Limits</div>
<div class="t" style="left:984.7px;top:111px;color:#111;transform:scaleX(1.020);">Controls</div>
<svg class="abs" style="left:260px;top:132px" width="722" height="336" viewBox="260 132 722 336"><rect x="266" y="137" width="710.200" height="325.500" fill="#c4c4c4"/><rect x="266.500" y="137.500" width="709.200" height="324.500" fill="#a2a2a2"/><rect x="267.300" y="138.400" width="707.500" height="322.800" fill="#b4b4b4"/></svg>
<svg class="abs" style="left:260px;top:130px" width="722" height="340" viewBox="260 130 722 340"><defs><clipPath id="pc"><rect x="268" y="139.2" width="705.8" height="321.0"/></clipPath></defs><g clip-path="url(#pc)"><rect x="268" y="139.2" width="705.8" height="321.0" fill="#fff"/><path d="M291.52 139.2V460.2M315.77 139.2V460.2M337.16 139.2V460.2M356.30 139.2V460.2M482.19 139.2V460.2M555.83 139.2V460.2M608.08 139.2V460.2M648.61 139.2V460.2M681.72 139.2V460.2M709.72 139.2V460.2M733.97 139.2V460.2M755.36 139.2V460.2M774.50 139.2V460.2M900.39 139.2V460.2M268 172.10H973.8M268 215.83H973.8M268 259.56H973.8M268 303.29H973.8M268 347.02H973.8M268 390.75H973.8M268 434.48H973.8" stroke="#c9c9c9" stroke-width="1" fill="none"/><path d="M300.38 139.2V460.2" stroke="#3a3aee" stroke-width="1"/><path d="M267.7 222.6C268.4 221.8 270.6 218.9 272.1 217.7C273.6 216.5 275.1 215.3 276.5 215.3C277.9 215.3 278.9 216.0 280.2 217.7C281.5 219.3 282.9 222.6 284.2 225.2C285.5 227.8 286.9 231.0 288.2 233.2C289.5 235.4 290.8 237.1 292.2 238.3C293.6 239.5 294.9 239.7 296.3 240.3C297.7 240.9 299.0 241.0 300.3 241.7C301.6 242.4 303.0 243.0 304.3 244.3C305.6 245.6 307.0 247.2 308.4 249.4C309.8 251.6 311.1 255.0 312.4 257.4C313.7 259.8 314.9 262.2 316.0 263.5C317.1 264.8 317.7 265.2 318.8 265.3C319.9 265.4 321.2 264.9 322.5 264.1C323.8 263.3 325.2 261.9 326.5 260.5C327.8 259.1 329.1 257.2 330.5 256.0C331.9 254.8 333.6 253.6 335.0 253.4C336.4 253.2 337.3 254.2 338.6 254.8C339.9 255.4 341.3 256.2 342.6 256.8C343.9 257.4 345.2 257.5 346.6 258.4C348.0 259.3 349.4 260.6 350.7 262.1C352.0 263.6 353.4 265.4 354.7 267.5C356.0 269.6 357.3 271.8 358.7 274.6C360.1 277.5 361.6 281.7 362.8 284.6C364.0 287.6 365.1 290.7 365.8 292.3C366.5 293.9 366.7 294.2 367.2 294.3C367.7 294.4 367.9 294.3 368.8 292.7C369.7 291.1 371.5 287.6 372.8 284.6C374.1 281.6 375.5 278.6 376.9 274.6C378.2 270.6 379.7 264.7 380.9 260.5C382.1 256.3 382.9 252.3 383.9 249.4C384.9 246.5 385.9 244.8 387.0 243.3C388.1 241.8 389.3 240.7 390.6 240.3C391.9 239.9 393.3 240.5 395.0 240.7C396.7 240.9 399.3 241.3 401.0 241.7C402.7 242.1 403.8 242.5 405.1 243.3C406.5 244.1 407.8 245.5 409.1 246.3C410.4 247.2 411.9 248.2 413.1 248.4C414.3 248.6 415.4 247.9 416.2 247.4C417.0 246.9 417.0 246.8 418.1 245.3C419.2 243.9 421.4 240.3 423.1 238.7C424.8 237.1 426.8 235.7 428.5 235.5C430.2 235.3 431.6 236.2 433.2 237.3C434.8 238.4 436.7 240.0 438.2 242.3C439.7 244.7 440.8 248.0 442.2 251.4C443.6 254.8 445.1 259.7 446.3 262.5C447.5 265.3 448.4 267.0 449.3 268.1C450.2 269.2 450.9 269.5 451.9 269.1C452.9 268.7 454.1 267.8 455.3 265.5C456.6 263.2 458.0 258.4 459.4 255.4C460.8 252.4 462.1 249.5 463.4 247.4C464.7 245.3 466.2 243.7 467.4 242.7C468.6 241.7 469.5 241.4 470.5 241.5C471.5 241.6 472.3 241.8 473.5 243.3C474.7 244.8 476.2 248.2 477.5 250.4C478.8 252.7 480.0 255.2 481.5 256.8C483.0 258.4 485.1 258.4 486.6 259.8C488.1 261.2 489.3 263.6 490.6 265.5C491.9 267.4 493.2 268.8 494.6 271.5C496.0 274.2 497.5 278.4 498.7 281.6C499.9 284.8 500.8 288.3 501.7 290.7C502.6 293.1 503.3 295.6 504.1 296.1C504.9 296.6 505.4 295.9 506.3 293.7C507.2 291.4 508.7 285.6 509.8 282.6C510.9 279.6 511.8 277.4 512.8 275.6C513.8 273.8 514.8 272.6 515.8 271.7C516.8 270.8 517.9 270.5 518.8 270.5C519.7 270.5 520.5 270.9 521.4 271.9C522.2 272.9 523.1 275.2 523.9 276.6C524.7 278.1 525.5 279.9 526.3 280.6C527.1 281.3 528.1 280.7 528.9 281.0C529.7 281.3 530.2 282.1 530.9 282.6C531.6 283.1 532.5 283.9 533.3 283.8C534.1 283.7 535.0 282.8 535.9 282.2C536.8 281.6 537.8 281.6 538.6 280.2C539.5 278.8 540.1 276.4 541.0 273.6C541.9 270.8 543.0 266.4 544.0 263.5C545.0 260.6 546.0 257.9 547.0 256.0C548.0 254.2 549.0 252.9 550.0 252.4C551.0 251.9 551.9 252.5 552.7 252.8C553.6 253.1 554.2 254.4 555.1 254.0C556.0 253.6 557.1 251.8 558.1 250.4C559.1 249.0 560.4 246.4 561.1 245.3C561.8 244.2 561.7 244.2 562.4 243.7C563.1 243.2 564.3 242.1 565.4 242.3C566.5 242.5 567.9 243.5 569.1 244.7C570.3 245.9 571.3 247.8 572.5 249.4C573.7 251.0 574.8 253.0 576.1 254.0C577.4 255.0 578.9 255.3 580.2 255.2C581.5 255.1 582.7 254.2 583.8 253.6C584.9 253.0 585.8 251.7 586.8 251.8C587.8 251.9 588.7 252.9 589.8 254.0C590.9 255.1 592.4 258.5 593.5 258.6C594.6 258.7 595.2 256.4 596.3 254.4C597.4 252.4 598.7 249.1 599.9 246.8C601.1 244.6 602.2 242.1 603.3 240.9C604.4 239.7 605.3 239.5 606.3 239.7C607.2 239.9 608.0 241.0 609.0 242.3C610.0 243.6 610.8 245.7 612.0 247.4C613.2 249.1 615.0 250.8 616.4 252.4C617.8 254.0 619.1 255.3 620.5 256.8C621.9 258.3 623.3 259.7 624.5 261.5C625.7 263.3 626.6 265.7 627.5 267.5C628.4 269.3 629.3 270.9 630.1 272.1C630.9 273.3 631.6 273.8 632.5 274.6C633.4 275.4 634.4 277.1 635.2 277.0C636.1 276.9 636.8 275.2 637.6 274.2C638.4 273.2 639.2 271.2 640.0 270.9C640.8 270.5 641.8 271.6 642.6 272.1C643.4 272.6 644.0 273.6 645.0 274.0C646.0 274.4 647.7 275.0 648.7 274.6C649.7 274.2 650.3 273.1 651.1 271.5C651.9 269.9 652.8 267.0 653.7 264.9C654.6 262.8 655.7 260.7 656.7 258.8C657.7 256.9 658.7 255.1 659.7 253.4C660.7 251.7 661.7 249.9 662.8 248.8C663.9 247.7 665.0 247.1 666.2 247.0C667.4 246.9 668.7 247.4 669.8 248.0C670.9 248.6 671.8 250.0 672.8 250.8C673.8 251.6 674.7 252.5 675.9 253.0C677.1 253.5 678.8 253.3 679.9 254.0C681.0 254.7 681.6 255.8 682.5 257.4C683.4 259.0 684.2 261.8 685.3 263.5C686.4 265.2 687.7 266.2 689.0 267.5C690.3 268.8 691.8 270.1 693.0 271.5C694.2 272.9 695.1 275.1 696.0 276.2C696.9 277.3 697.5 278.3 698.4 278.2C699.2 278.1 700.1 277.4 701.1 275.6C702.1 273.8 703.1 270.1 704.1 267.5C705.1 264.9 706.0 262.2 707.1 260.0C708.2 257.8 709.7 255.7 710.7 254.4C711.7 253.1 712.2 253.0 713.0 252.4C713.8 251.8 714.7 251.6 715.6 251.0C716.5 250.4 717.6 249.0 718.5 249.0C719.4 249.0 720.3 250.1 721.1 250.8C721.9 251.5 722.6 253.1 723.5 253.4C724.4 253.7 725.5 252.5 726.5 252.6C727.5 252.7 728.8 253.9 729.7 253.8C730.7 253.7 731.4 252.7 732.2 252.0C733.0 251.3 733.6 249.9 734.6 249.4C735.6 248.9 737.0 249.1 738.2 248.8C739.4 248.5 740.7 247.7 741.8 247.8C742.9 247.9 743.8 248.2 744.7 249.4C745.6 250.6 746.4 252.6 747.3 254.8C748.2 257.0 749.0 260.2 749.9 262.5C750.8 264.8 751.7 267.1 752.7 268.5C753.7 269.9 754.8 270.3 755.9 271.1C757.0 271.9 758.4 272.8 759.4 273.4C760.4 274.0 761.1 274.8 762.0 274.6C762.9 274.5 763.8 273.9 764.8 272.5C765.8 271.1 767.0 268.2 768.0 266.1C769.0 264.0 770.1 261.6 771.1 259.8C772.1 258.0 773.1 256.3 774.1 255.4C775.1 254.5 776.0 254.1 776.9 254.4C777.8 254.7 778.6 255.6 779.5 257.4C780.4 259.1 781.2 262.9 782.1 264.9C783.0 266.9 784.1 267.6 785.0 269.5C785.9 271.4 786.8 273.8 787.6 276.0C788.4 278.2 789.3 280.9 790.0 282.6C790.7 284.3 791.2 286.0 792.0 286.2C792.8 286.4 793.7 284.4 794.6 283.6C795.5 282.8 796.4 281.6 797.3 281.2C798.2 280.8 799.3 281.7 800.1 281.2C800.9 280.7 801.5 279.4 802.3 278.2C803.1 277.0 804.0 276.1 804.7 274.2C805.4 272.2 806.0 269.5 806.7 266.5C807.4 263.5 808.0 259.6 808.7 256.4C809.4 253.2 810.0 250.1 810.8 247.4C811.5 244.7 812.3 242.2 813.2 240.3C814.1 238.4 815.2 236.9 816.2 235.9C817.2 234.9 818.3 234.3 819.4 234.3C820.5 234.3 821.6 234.9 822.8 235.9C824.0 236.9 825.2 238.4 826.5 240.3C827.8 242.2 829.2 244.6 830.3 247.4C831.4 250.2 832.3 254.0 833.3 257.4C834.3 260.8 835.4 264.6 836.4 267.5C837.4 270.4 838.3 273.2 839.4 275.0C840.5 276.8 841.8 276.8 843.0 278.0C844.2 279.2 845.5 281.7 846.6 282.0C847.7 282.3 848.4 281.2 849.4 279.6C850.4 278.0 851.5 275.0 852.5 272.5C853.5 270.0 854.4 266.8 855.5 264.5C856.6 262.2 858.0 259.9 859.2 258.6C860.5 257.3 861.8 256.9 863.0 256.9C864.2 256.9 865.2 257.3 866.3 258.6C867.4 259.9 868.5 262.4 869.5 264.5C870.5 266.6 871.6 268.9 872.6 270.9C873.6 272.8 874.7 274.8 875.8 276.2C876.9 277.6 878.1 279.1 879.2 279.0C880.3 278.9 881.2 277.4 882.2 275.6C883.2 273.9 884.3 270.7 885.3 268.5C886.3 266.3 887.2 264.0 888.3 262.5C889.4 261.0 890.6 259.8 891.7 259.6C892.8 259.4 893.7 260.3 894.7 261.1C895.8 261.9 897.0 262.9 898.0 264.5C899.0 266.1 899.6 268.6 900.4 270.5C901.2 272.4 902.1 274.4 903.0 275.6C903.9 276.8 905.0 277.5 906.0 277.8C907.0 278.1 908.0 278.1 909.0 277.6C910.0 277.1 911.0 275.3 911.9 274.6C912.8 273.9 913.6 273.1 914.5 273.4C915.4 273.7 916.2 274.5 917.1 276.2C918.0 277.9 919.1 281.2 920.1 283.6C921.1 286.0 922.1 288.4 923.1 290.7C924.1 293.0 925.1 296.1 926.0 297.7C926.9 299.3 927.5 300.4 928.2 300.4C928.9 300.4 929.5 299.6 930.2 297.7C930.9 295.8 931.5 292.0 932.2 288.7C932.9 285.4 933.8 280.8 934.6 277.6C935.4 274.4 936.1 271.5 937.0 269.5C937.9 267.5 938.8 266.3 939.7 265.5C940.7 264.7 941.7 264.8 942.7 264.9C943.7 265.0 944.8 266.0 945.7 265.9C946.6 265.8 947.4 264.9 948.3 264.5C949.2 264.1 950.3 263.4 951.2 263.5C952.1 263.6 952.9 264.1 953.8 264.9C954.7 265.7 955.8 267.8 956.8 268.1C957.8 268.4 958.8 266.9 959.8 266.5C960.8 266.1 961.8 265.6 962.8 265.7C963.8 265.8 964.9 266.1 965.9 266.9C966.9 267.7 968.0 269.4 968.9 270.5C969.8 271.6 970.7 273.0 971.5 273.8C972.3 274.6 973.3 275.1 973.7 275.4" fill="none" stroke="#0e8080" stroke-width="1.750" stroke-linejoin="round" stroke-linecap="round"/></g></svg>
<div class="t" style="left:255.3px;top:166px;font-size:8.40px;color:#222;transform:scaleX(0.856);">90</div>
<div class="t" style="left:255.3px;top:209px;font-size:8.40px;color:#222;transform:scaleX(0.856);">80</div>
<div class="t" style="left:255.3px;top:253px;font-size:8.40px;color:#222;transform:scaleX(0.856);">70</div>
<div class="t" style="left:255.3px;top:297px;font-size:8.40px;color:#222;transform:scaleX(0.856);">60</div>
<div class="t" style="left:255.3px;top:341px;font-size:8.40px;color:#222;transform:scaleX(0.856);">50</div>
<div class="t" style="left:255.3px;top:384px;font-size:8.40px;color:#222;transform:scaleX(0.856);">40</div>
<div class="t" style="left:255.3px;top:428px;font-size:8.40px;color:#222;transform:scaleX(0.856);">30</div>
<div class="t" style="left:977.9px;top:166px;font-size:8.40px;color:#222;transform:scaleX(0.899);">720</div>
<div class="t" style="left:977.9px;top:209px;font-size:8.40px;color:#222;transform:scaleX(0.899);">540</div>
<div class="t" style="left:977.9px;top:253px;font-size:8.40px;color:#222;transform:scaleX(0.899);">360</div>
<div class="t" style="left:977.9px;top:297px;font-size:8.40px;color:#222;transform:scaleX(0.899);">180</div>
<div class="t" style="left:977.9px;top:341px;font-size:8.40px;color:#222;transform:scaleX(0.877);">0</div>
<div class="t" style="left:977.9px;top:384px;font-size:8.40px;color:#222;transform:scaleX(0.951);">-180</div>
<div class="t" style="left:977.9px;top:428px;font-size:8.40px;color:#222;transform:scaleX(0.951);">-360</div>
<div class="t" style="left:265.0px;top:463px;font-size:8.40px;color:#222;transform:scaleX(0.802);">62</div>
<div class="t" style="left:312.5px;top:463px;font-size:8.40px;color:#222;transform:scaleX(0.802);">80</div>
<div class="t" style="left:334.0px;top:463px;font-size:8.40px;color:#222;transform:scaleX(0.802);">90</div>
<div class="t" style="left:350.0px;top:463px;font-size:8.40px;color:#222;transform:scaleX(0.800);">100</div>
<div class="t" style="left:476.0px;top:463px;font-size:8.40px;color:#222;transform:scaleX(0.820);">200</div>
<div class="t" style="left:550.5px;top:463px;font-size:8.40px;color:#222;transform:scaleX(0.856);">300</div>
<div class="t" style="left:602.0px;top:463px;font-size:8.40px;color:#222;transform:scaleX(0.856);">400</div>
<div class="t" style="left:643.0px;top:463px;font-size:8.40px;color:#222;transform:scaleX(0.856);">500</div>
<div class="t" style="left:676.0px;top:463px;font-size:8.40px;color:#222;transform:scaleX(0.856);">600</div>
<div class="t" style="left:704.0px;top:463px;font-size:8.40px;color:#222;transform:scaleX(0.856);">700</div>
<div class="t" style="left:728.5px;top:463px;font-size:8.40px;color:#222;transform:scaleX(0.856);">800</div>
<div class="t" style="left:750.0px;top:463px;font-size:8.40px;color:#222;transform:scaleX(0.856);">900</div>
<div class="t" style="left:768.5px;top:463px;font-size:8.40px;color:#222;transform:scaleX(0.913);">1.0k</div>
<div class="t" style="left:894.5px;top:463px;font-size:8.40px;color:#222;transform:scaleX(0.881);">2.0k</div>
<div class="t" style="left:956.0px;top:463px;font-size:8.40px;color:#222;transform:scaleX(0.935);">2.99k Hz</div>
<div class="t" style="left:287.6px;top:463px;font-size:8.40px;color:#222;transform:scaleX(0.834);">70</div>
<div class="abs" style="left:290.300px;top:464.700px;width:19.800px;height:10.600px;box-sizing:border-box;border:1px solid #3a3aee;background:#fff"></div>
<div class="t" style="left:292.3px;top:463px;font-size:8.40px;color:#2a2ae0;transform:scaleX(0.978);">73.5</div>
<div class="abs" style="left:299.88px;top:460px;width:1px;height:5px;background:#3a3aee"></div>
<div class="abs" style="left:267px;top:477.500px;width:707px;height:11.500px;background:linear-gradient(#e6e6e6,#efefef 40%,#f1f1f1)"></div>
<div class="abs" style="left:524.500px;top:478px;width:272.500px;height:10.800px;box-sizing:border-box;border:1px solid #a6a6a6;border-radius:2.500px;background:linear-gradient(#f6f6f6,#e6e6e6 50%,#cecece)"></div>
<svg class="abs" style="left:267px;top:477px" width="708" height="13" viewBox="0 0 708 13"><path d="M7.600 4L5 6.400L7.600 8.800ZM698.400 4L701 6.400L698.400 8.800Z" fill="#3c3c3c"/><path d="M391 4v4.800M392.800 4v4.800M394.600 4v4.800M396.400 4v4.800" stroke="#555" stroke-width=".7"/></svg>
<div class="abs" style="left:1010.300px;top:138.800px;width:12.700px;height:322px;background:linear-gradient(90deg,#e4e4e4,#efefef 40%,#f1f1f1)"></div>
<div class="abs" style="left:1010.500px;top:241.800px;width:12.200px;height:88.500px;box-sizing:border-box;border:1px solid #a8a8a8;border-radius:2.500px;background:linear-gradient(90deg,#f6f6f6,#e4e4e4 50%,#cfcfcf)"></div>
<svg class="abs" style="left:1010px;top:138px" width="14" height="324" viewBox="0 0 14 324"><path d="M4.200 8.800L6.700 6.100L9.200 8.800Z" fill="#3c3c3c"/><path d="M4.200 315.800L6.700 318.500L9.200 315.800Z" fill="#3c3c3c"/><path d="M4 145.200h5M4 147h5M4 148.800h5M4 150.600h5" stroke="#555" stroke-width=".7"/></svg>
<svg class="abs" style="left:268px;top:488px" width="704" height="42" viewBox="268 488 704 42"><rect x="271.600" y="491.300" width="697.100" height="35.100" fill="#bdbdbd"/><rect x="272.200" y="491.900" width="695.900" height="33.900" fill="#9e9e9e"/><rect x="273.400" y="493.100" width="693.500" height="31.500" fill="#b8b8b8"/><rect x="274.300" y="493.800" width="691.900" height="30.100" fill="#fff"/></svg>
<svg class="abs" style="left:277.3px;top:494.2px" width="12" height="12" viewBox="-1 -1 12 12"><defs><linearGradient id="cbg278495" x1="0" y1="0" x2="1" y2="1"><stop offset="0" stop-color="#dcdcdc"/><stop offset="1" stop-color="#fdfdfd"/></linearGradient></defs><rect x=".5" y=".5" width="8.300" height="8.300" fill="url(#cbg278495)" stroke="#8a8c90" stroke-width="1"/><path d="M2.300 4.400L3.900 6.500L6.900 2.200" fill="none" stroke="#28388c" stroke-width="1.400"/></svg>
<div class="t" style="left:291.5px;top:493px;color:#107e7e;transform:scaleX(0.938);">Nov 24 18:10:27</div>
<svg class="abs" style="left:396px;top:492px" width="30" height="16" viewBox="396 492 30 16"><path d="M398 499.800H401M421.300 499.800H424.400" stroke="#107e7e" stroke-width="1.100"/><rect x="401.300" y="494.300" width="19.900" height="11.100" rx="2.200" fill="#fff" stroke="#107e7e" stroke-width="1.500"/><path d="M405.600 504L410.200 496.300" stroke="#222" stroke-width=".8"/><text x="403" y="501.800" font-family="Liberation Serif, serif" font-size="6.800" fill="#111">1</text><text x="410.300" y="504.300" font-family="Liberation Serif, serif" font-size="7.400" fill="#111">12</text></svg>
<div class="t" style="left:446.5px;top:493px;color:#107e7e;transform:scaleX(0.973);">74.1 dB</div>
<svg class="abs" style="left:503.6px;top:494.2px" width="12" height="12" viewBox="-1 -1 12 12"><defs><linearGradient id="cbg504495" x1="0" y1="0" x2="1" y2="1"><stop offset="0" stop-color="#dcdcdc"/><stop offset="1" stop-color="#fdfdfd"/></linearGradient></defs><rect x=".5" y=".5" width="8.300" height="8.300" fill="url(#cbg504495)" stroke="#8a8c90" stroke-width="1"/></svg>
<div class="t" style="left:518.0px;top:493px;color:#12aab8;transform:scaleX(0.892);">Phase</div>
<div class="t" style="left:668.5px;top:493px;color:#12aab8;transform:scaleX(0.998);">-322 deg</div>
<svg class="abs" style="left:730.3px;top:494.2px" width="12" height="12" viewBox="-1 -1 12 12"><defs><linearGradient id="cbg731495" x1="0" y1="0" x2="1" y2="1"><stop offset="0" stop-color="#dcdcdc"/><stop offset="1" stop-color="#fdfdfd"/></linearGradient></defs><rect x=".5" y=".5" width="8.300" height="8.300" fill="url(#cbg731495)" stroke="#c4c4c4" stroke-width="1"/><path d="M2.300 4.400L3.900 6.500L6.900 2.200" fill="none" stroke="#bcbcbc" stroke-width="1.400"/></svg>
<div class="t" style="left:744.5px;top:493px;color:#868686;transform:scaleX(1.020);">Min phase</div>
<div class="t" style="left:913.5px;top:493px;color:#868686;transform:scaleX(1.022);">deg</div>
<svg class="abs" style="left:277.3px;top:511.70000000000005px" width="12" height="12" viewBox="-1 -1 12 12"><defs><linearGradient id="cbg278512" x1="0" y1="0" x2="1" y2="1"><stop offset="0" stop-color="#dcdcdc"/><stop offset="1" stop-color="#fdfdfd"/></linearGradient></defs><rect x=".5" y=".5" width="8.300" height="8.300" fill="url(#cbg278512)" stroke="#c4c4c4" stroke-width="1"/><path d="M2.300 4.400L3.900 6.500L6.900 2.200" fill="none" stroke="#bcbcbc" stroke-width="1.400"/></svg>
<div class="t" style="left:291.5px;top:511px;color:#868686;transform:scaleX(0.916);">Excess phase</div>
<div class="t" style="left:460.5px;top:511px;color:#868686;transform:scaleX(1.022);">deg</div>
<svg class="abs" style="left:503.6px;top:511.70000000000005px" width="12" height="12" viewBox="-1 -1 12 12"><defs><linearGradient id="cbg504512" x1="0" y1="0" x2="1" y2="1"><stop offset="0" stop-color="#dcdcdc"/><stop offset="1" stop-color="#fdfdfd"/></linearGradient></defs><rect x=".5" y=".5" width="8.300" height="8.300" fill="url(#cbg504512)" stroke="#c4c4c4" stroke-width="1"/><path d="M2.300 4.400L3.900 6.500L6.900 2.200" fill="none" stroke="#bcbcbc" stroke-width="1.400"/></svg>
<div class="t" style="left:518.0px;top:511px;color:#868686;transform:scaleX(1.001);">Mic/Meter Cal</div>
<div class="t" style="left:692.0px;top:511px;color:#868686;transform:scaleX(0.962);">dB</div>
<svg class="abs" style="left:730.3px;top:511.70000000000005px" width="12" height="12" viewBox="-1 -1 12 12"><defs><linearGradient id="cbg731512" x1="0" y1="0" x2="1" y2="1"><stop offset="0" stop-color="#dcdcdc"/><stop offset="1" stop-color="#fdfdfd"/></linearGradient></defs><rect x=".5" y=".5" width="8.300" height="8.300" fill="url(#cbg731512)" stroke="#8a8c90" stroke-width="1"/></svg>
<div class="t" style="left:744.5px;top:511px;color:#111;transform:scaleX(0.996);">Soundcard Cal</div>
<div class="t" style="left:901.0px;top:511px;color:#111;transform:scaleX(0.985);">-0.2 dB</div>
<div class="abs" style="left:0;top:528.500px;width:1024px;height:17.500px;background:#dfdfdf;border-top:1px solid #a8a8a8;box-sizing:border-box"></div>
<div class="abs" style="left:0;top:529.500px;width:1024px;height:1px;background:#f2f2f2"></div>
<div class="abs" style="left:59.5px;top:529.500px;width:1px;height:17px;background:#a8a8a8"></div><div class="abs" style="left:60.5px;top:529.500px;width:1px;height:17px;background:#f4f4f4"></div>
<div class="abs" style="left:102px;top:529.500px;width:1px;height:17px;background:#a8a8a8"></div><div class="abs" style="left:103px;top:529.500px;width:1px;height:17px;background:#f4f4f4"></div>
<div class="abs" style="left:131px;top:529.500px;width:1px;height:17px;background:#a8a8a8"></div><div class="abs" style="left:132px;top:529.500px;width:1px;height:17px;background:#f4f4f4"></div>
<div class="abs" style="left:871px;top:529.500px;width:1px;height:17px;background:#a8a8a8"></div><div class="abs" style="left:872px;top:529.500px;width:1px;height:17px;background:#f4f4f4"></div>
<div class="t" style="left:2.0px;top:531px;color:#111;transform:scaleX(0.999);">45/62MB</div>
<div class="t" style="left:63.0px;top:531px;color:#111;transform:scaleX(0.962);">44100 Hz</div>
<div class="t" style="left:105.0px;top:531px;color:#111;transform:scaleX(1.012);">16 Bit</div>
</body></html>
